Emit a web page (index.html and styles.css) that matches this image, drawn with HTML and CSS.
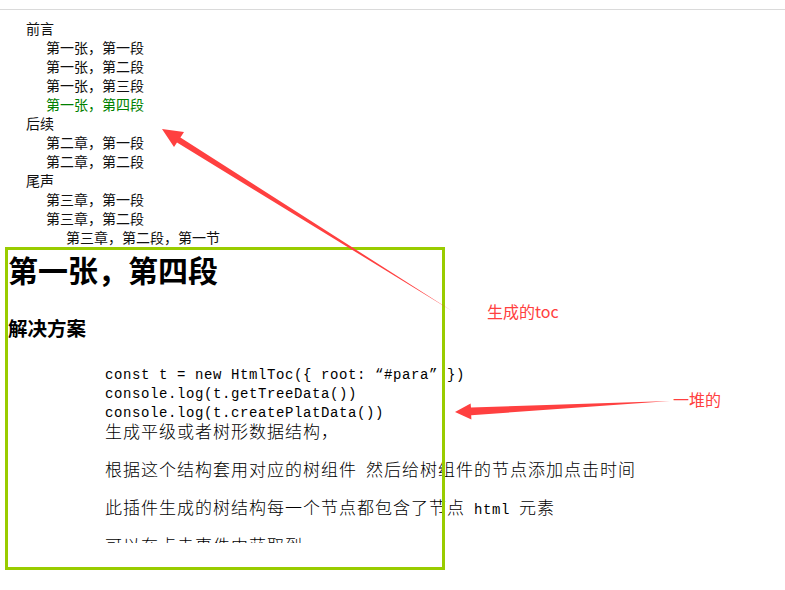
FILE: index.html
```html
<!DOCTYPE html>
<html lang="zh">
<head>
<meta charset="utf-8">
<title>HtmlToc</title>
<link rel="stylesheet" href="styles.css">
</head>
<body>
<div class="page">
  <div class="topline"></div>
  <ul class="toc">
    <li><span class="item">前言</span>
      <ul>
        <li><span class="item">第一张，第一段</span></li>
        <li><span class="item">第一张，第二段</span></li>
        <li><span class="item">第一张，第三段</span></li>
        <li><span class="item active">第一张，第四段</span></li>
      </ul>
    </li>
    <li><span class="item">后续</span>
      <ul>
        <li><span class="item">第二章，第一段</span></li>
        <li><span class="item">第二章，第二段</span></li>
      </ul>
    </li>
    <li><span class="item">尾声</span>
      <ul>
        <li><span class="item">第三章，第一段</span></li>
        <li><span class="item">第三章，第二段</span>
          <ul>
            <li><span class="item">第三章，第二段，第一节</span></li>
          </ul>
        </li>
      </ul>
    </li>
  </ul>
  <div class="content">
    <h1 class="title">第一张，第四段</h1>
    <h3 class="subtitle">解决方案</h3>
    <div class="pre">
      <div class="line code">const t = new HtmlToc({ root: “#para” })</div>
      <div class="line code">console.log(t.getTreeData())</div>
      <div class="line code">console.log(t.createPlatData())</div>
      <div class="line">生成平级或者树形数据结构，</div>
      <div class="line blank"></div>
      <div class="line">根据这个结构套用对应的树组件<span class="mono"> </span>然后给树组件的节点添加点击时间</div>
      <div class="line blank"></div>
      <div class="line">此插件生成的树结构每一个节点都包含了节点<span class="mono"> html </span>元素</div>
      <div class="line blank"></div>
      <div class="line">可以在点击事件中获取到</div>
    </div>
  </div>

  <div class="annot-box"></div>
  <svg class="annot-arrows" width="785" height="590" viewBox="0 0 785 590">
    <polygon class="arrow" points="162,129 184,132 180.4,137.6 452,311 177.0,142.5 174,147"/>
    <polygon class="arrow" points="455,412 470.6,403.5 471.0,407.5 670,401 471.2,415.2 471.4,419.5"/>
  </svg>
  <span class="label label-toc">生成的toc</span>
  <span class="label label-pile">一堆的</span>
</div>
</body>
</html>
```

FILE: styles.css
```css
html, body {
  margin: 0;
  padding: 0;
  background: #ffffff;
}

.page {
  position: relative;
  width: 785px;
  height: 590px;
  overflow: hidden;
  font-family: "Noto Sans CJK SC", "Noto Sans", sans-serif;
  color: #000;
}

.topline {
  height: 9px;
  border-bottom: 1px solid #dadada;
}

.toc {
  list-style: none;
  margin: 0;
  padding: 9px 0 0 26px;
  font-size: 14px;
  line-height: 19px;
}

.toc ul {
  list-style: none;
  margin: 0;
  padding: 0 0 0 20px;
}

.toc li {
  margin: 0;
}

.item {
  color: #111;
}

.item.active {
  color: #008000;
}

.content {
  height: 296px;
  overflow: hidden;
  padding-left: 8px;
}

.title {
  margin: 4px 0 0;
  font-size: 30px;
  line-height: 36px;
  font-weight: bold;
}

.subtitle {
  margin: 29px 0 0;
  font-size: 19.5px;
  line-height: 24px;
  font-weight: bold;
}

.pre {
  margin: 24px 0 0 97px;
  font-size: 17px;
  line-height: 19px;
  letter-spacing: 1px;
  font-weight: 300;
}

.line {
  height: 19px;
  white-space: pre;
}

.line.code {
  font-family: "Liberation Mono", monospace;
  font-size: 14px;
  line-height: 23px;
  letter-spacing: 0.6px;
  font-weight: normal;
}

.mono {
  font-family: "Liberation Mono", monospace;
  font-size: 14px;
  letter-spacing: 0.6px;
  font-weight: normal;
}

.annot-box {
  position: absolute;
  left: 5px;
  top: 247px;
  width: 440px;
  height: 323px;
  box-sizing: border-box;
  border: 3px solid #99cc00;
}

.annot-arrows {
  position: absolute;
  left: 0;
  top: 0;
}

.arrow {
  fill: #ff4040;
}

.label {
  position: absolute;
  font-size: 16px;
  line-height: 20px;
  color: #ff4040;
}

.label-toc {
  left: 487px;
  top: 301px;
}

.label-pile {
  left: 673px;
  top: 389px;
}
```
